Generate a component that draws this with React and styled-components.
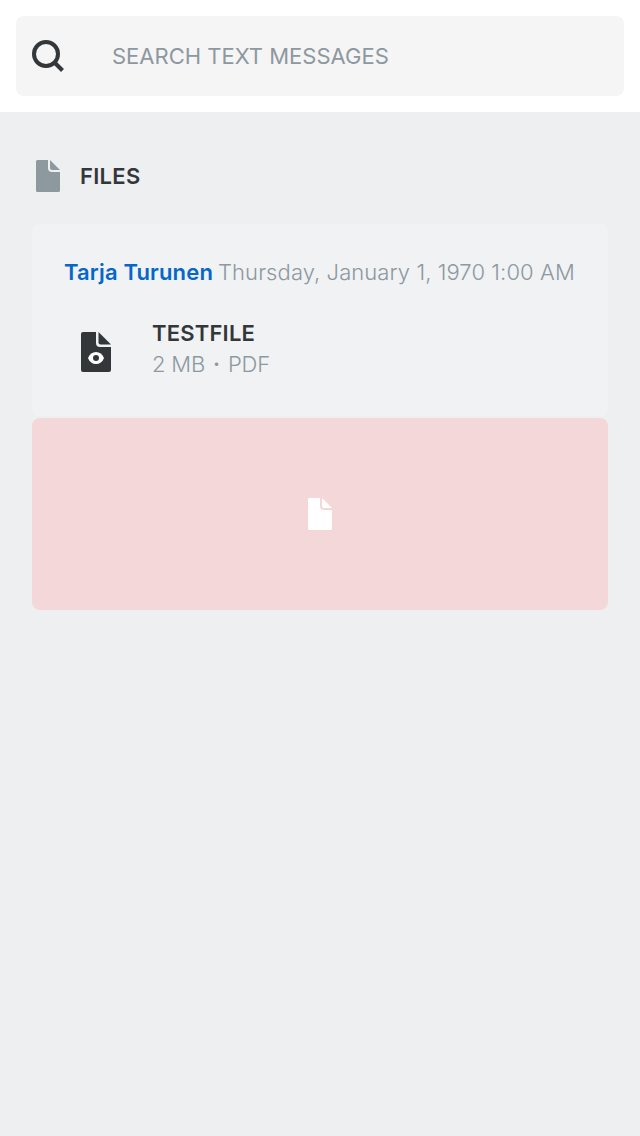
import React from "react";
import styled, { createGlobalStyle } from "styled-components";

const GlobalStyle = createGlobalStyle`
  * { box-sizing: border-box; }
  body { margin: 0; background: #edeff0; font-family: Inter, "Liberation Sans", sans-serif; }
  svg { display: block; }
`;
const Page = styled.main`
  min-height: 1136px;
  background: #edeff0;
`;
const Header = styled.header`
  padding: 16px;
  background: #fff;
`;
const SearchField = styled.div`
  height: 80px;
  display: flex;
  align-items: center;
  gap: 48px;
  padding: 0 16px;
  border-radius: 8px;
  background: #f5f5f5;
`;
const Placeholder = styled.span`
  font-size: 22px;
  line-height: 28px;
  color: #8d989f;
`;
const Section = styled.section`
  padding: 48px 32px 0;
`;
const SectionTitle = styled.h2`
  display: flex;
  align-items: center;
  gap: 16px;
  height: 32px;
  margin: 0 0 32px;
  font-size: 22px;
  font-weight: 600;
  letter-spacing: 0.3px;
  color: #33373a;
`;
const Card = styled.article`
  height: 192px;
  padding: 34px 32px;
  border-radius: 8px;
  background: #f0f2f4;
`;
const Meta = styled.div`
  display: flex;
  gap: 5px;
  font-size: 22px;
  line-height: 28px;
  white-space: nowrap;
`;
const Sender = styled.span`
  font-weight: 600;
  letter-spacing: 0.15px;
  color: #0667c8;
`;
const Timestamp = styled.time`
  font-weight: 300;
  letter-spacing: 0.08px;
  color: #8d989f;
`;
const FileRow = styled.div`
  display: flex;
  gap: 40px;
  margin-top: 32px;
  padding-left: 16px;
`;
const FileIconWrap = styled.div`
  padding-top: 14px;
`;
const FileName = styled.div`
  font-size: 22px;
  line-height: 31px;
  font-weight: 600;
  letter-spacing: 0.2px;
  color: #33373a;
`;
const FileInfo = styled.div`
  display: flex;
  font-size: 22px;
  line-height: 31px;
  font-weight: 300;
  letter-spacing: -0.2px;
  color: #8d989f;
`;
const Separator = styled.span`
  width: 23px;
  text-align: center;
  font-weight: 600;
`;
const PendingCard = styled.div`
  display: flex;
  align-items: center;
  justify-content: center;
  height: 192px;
  margin-top: 2px;
  border-radius: 8px;
  background: #f4d7d9;
`;

const FileIcon = ({ color }) => (
  <svg width="32" height="32" viewBox="0 0 32 32" fill={color}>
    <path d="M4 1.500Q4 0 5.500 0H16v8a4 4 0 0 0 4 4h8v18.500q0 1.500-1.500 1.500h-21Q4 32 4 30.500Z" />
    <path d="M18 0l10 10h-8a2 2 0 0 1-2-2Z" />
  </svg>
);
const FileEyeIcon = () => (
  <svg width="32" height="40" viewBox="0 0 32 40" fill="#33373a">
    <path d="M1 2a2 2 0 0 1 2-2h13v11a4 4 0 0 0 4 4h11v23a2 2 0 0 1-2 2H3a2 2 0 0 1-2-2Z" />
    <path d="M18.500 0L31 12.500H20.500a2 2 0 0 1-2-2Z" />
    <path fill="#fff" d="M8 26C9.500 22 12.500 20 16 20s6.500 2 8 6c-1.500 4-4.500 6-8 6s-6.500-2-8-6Z" />
    <circle cx="16" cy="26" r="3" />
  </svg>
);
const SearchIcon = () => (
  <svg width="32" height="32" viewBox="0 0 32 32" fill="none" stroke="#33373a" strokeWidth="4">
    <circle cx="14" cy="14" r="12" />
    <path d="M22.500 22.500l8 8" />
  </svg>
);

export default function App() {
  return (
    <Page>
      <GlobalStyle />
      <Header>
        <SearchField>
          <SearchIcon />
          <Placeholder>SEARCH TEXT MESSAGES</Placeholder>
        </SearchField>
      </Header>
      <Section>
        <SectionTitle>
          <FileIcon color="#8d989f" />
          FILES
        </SectionTitle>
        <Card>
          <Meta>
            <Sender>Tarja Turunen</Sender>
            <Timestamp>Thursday, January 1, 1970 1:00 AM</Timestamp>
          </Meta>
          <FileRow>
            <FileIconWrap><FileEyeIcon /></FileIconWrap>
            <div>
              <FileName>TESTFILE</FileName>
              <FileInfo>2 MB<Separator>·</Separator>PDF</FileInfo>
            </div>
          </FileRow>
        </Card>
        <PendingCard><FileIcon color="#fff" /></PendingCard>
      </Section>
    </Page>
  );
}
